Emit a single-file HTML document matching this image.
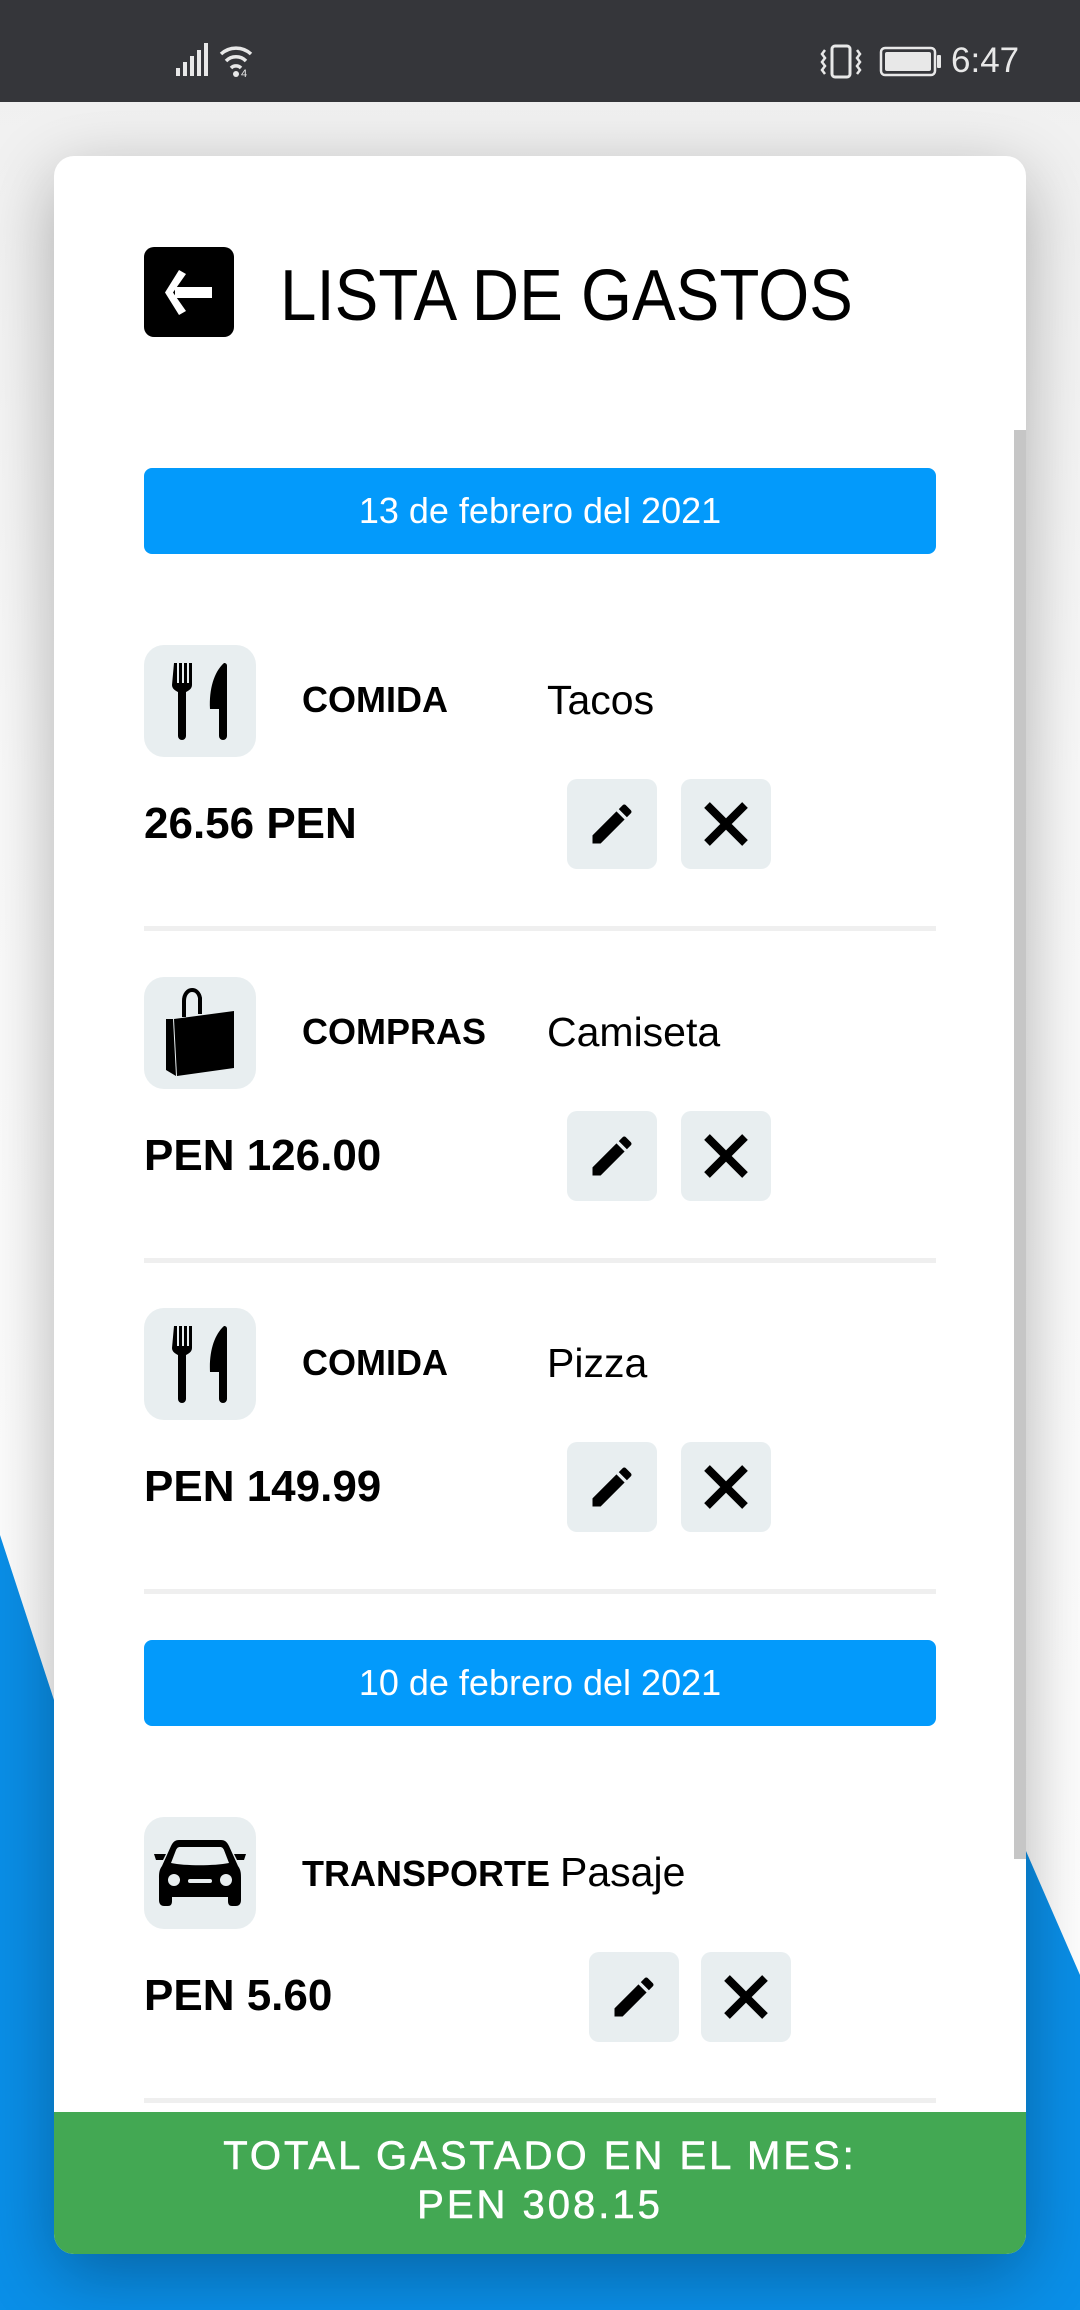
<!DOCTYPE html>
<html><head><meta charset="utf-8"><style>
*{margin:0;padding:0;box-sizing:border-box}
body{width:1080px;height:2310px;position:relative;overflow:hidden;font-family:"Liberation Sans",sans-serif;background:#f7f7f7}
.sb{position:absolute;left:0;top:0;width:1080px;height:102px;background:#35363a;z-index:5}
.card{position:absolute;left:54px;top:156px;width:972px;height:2098px;background:#fff;border-radius:20px;box-shadow:0 20px 70px rgba(0,0,0,0.3);overflow:hidden;z-index:3}
.abs{position:absolute}
.date{position:absolute;left:90px;width:792px;height:86px;background:#039afb;border-radius:8px;color:#fff;font-size:36px;text-align:center;line-height:86px}
.ibox{position:absolute;left:90px;width:112px;height:112px;background:#e8eef0;border-radius:20px}
.cat{position:absolute;left:248px;font-size:36px;font-weight:bold;line-height:40px}
.name{position:absolute;font-size:41px;line-height:46px}
.amt{position:absolute;left:90px;font-size:44px;font-weight:bold;line-height:50px}
.btn{position:absolute;width:90px;height:90px;background:#e8eef0;border-radius:10px}
.btn svg{position:absolute;left:19px;top:19px}
.div{position:absolute;left:90px;width:792px;height:5px;background:#efefef}
</style></head><body>
<svg class="abs" style="left:0;top:0;z-index:1" width="1080" height="2310">
<defs><linearGradient id="g" x1="0" y1="0" x2="0" y2="1"><stop offset="0" stop-color="#efefef"/><stop offset="0.4" stop-color="#fafafa"/><stop offset="1" stop-color="#ffffff"/></linearGradient></defs>
<rect x="0" y="0" width="1080" height="2310" fill="#0a8fe8"/>
<polygon points="0,0 1080,0 1080,1975 1026,1851 1026,1000 54,1000 54,1700 0,1535" fill="url(#g)"/></svg>
<div class="sb">
<svg class="abs" style="left:175px;top:42px" width="90" height="36" viewBox="0 0 90 36">
<g fill="#e8e8e8"><rect x="1" y="26" width="4" height="8"/><rect x="8" y="20" width="4" height="14"/><rect x="15" y="14" width="4" height="20"/><rect x="22" y="8" width="4" height="26"/><rect x="29" y="1" width="4" height="33"/></g>
<g fill="none" stroke="#e8e8e8" stroke-width="3.5"><path d="M46 12 A22 22 0 0 1 76 12"/><path d="M51 19 A14 14 0 0 1 71 19"/><path d="M56 26 A7 7 0 0 1 66 26"/></g>
<circle cx="61" cy="32" r="3" fill="#e8e8e8"/><text x="66" y="35" font-size="11" fill="#e8e8e8" font-family="Liberation Sans">4</text></svg>
<svg class="abs" style="left:820px;top:44px" width="125" height="36" viewBox="0 0 125 36">
<rect x="12" y="2" width="18" height="31" rx="3" fill="none" stroke="#e8e8e8" stroke-width="3"/>
<path d="M5 6 l-3 4 l3 4 l-3 4 l3 4 l-3 4 l3 4 M37 6 l3 4 l-3 4 l3 4 l-3 4 l3 4 l-3 4" fill="none" stroke="#e8e8e8" stroke-width="2.5"/>
<rect x="61" y="4" width="54" height="27" rx="4" fill="none" stroke="#e8e8e8" stroke-width="2.5"/>
<rect x="65" y="8" width="46" height="19" rx="2" fill="#e8e8e8"/>
<rect x="117" y="11" width="4" height="13" rx="1" fill="#e8e8e8"/></svg>
<div class="abs" style="left:951px;top:40px;font-size:35px;color:#e8e8e8;line-height:42px">6:47</div>
</div>
<div class="card">
<div class="abs" style="left:90px;top:91px;width:90px;height:90px;background:#000;border-radius:10px">
<svg class="abs" style="left:0;top:0" width="90" height="90" viewBox="0 0 90 90"><polygon points="35,23 42,27 29,45.5 42,64 35,68 21,45.5" fill="#fff"/><rect x="31" y="40" width="37" height="11" fill="#fff"/></svg></div>
<div class="abs" style="left:226px;top:100px;font-size:72px;line-height:80px;transform:scaleX(0.91);transform-origin:0 0;white-space:nowrap">LISTA DE GASTOS</div>
<div class="abs" style="right:0;top:274px;width:12px;height:1429px;background:#c6c6c6"></div>

<div class="date" style="top:312px">13 de febrero del 2021</div>

<div class="ibox" style="top:489px"><svg width="112" height="112" viewBox="0 0 112 112"><path d="M30 18h3v20h2V18h3v20h2V18h3v20h2V18h3v22c0 4-4 6-6 7v44a4 4 0 0 1-8 0V47c-2-1-6-3-6-7z" fill="#000"/><path d="M80 18c2 0 3 1 3 3v70a4 4 0 0 1-8 0V64h-9c-1-20 4-37 14-46z" fill="#000"/></svg></div>
<div class="cat" style="top:524px">COMIDA</div>
<div class="name" style="left:493px;top:521px">Tacos</div>
<div class="amt" style="top:643px">26.56 PEN</div>
<div class="btn" style="left:513px;top:623px"><svg width="52" height="52" viewBox="0 0 24 24"><path d="M3 17.25V21h3.75L17.81 9.94l-3.75-3.75L3 17.25zM20.71 7.04a1 1 0 000-1.41l-2.34-2.34a1 1 0 00-1.41 0l-1.83 1.83 3.75 3.75 1.83-1.83z"/></svg></div>
<div class="btn" style="left:627px;top:623px"><svg width="52" height="52" viewBox="0 0 52 52"><path d="M7 7L45 45M45 7L7 45" stroke="#000" stroke-width="8"/></svg></div>
<div class="div" style="top:770px"></div>

<div class="ibox" style="top:821px"><svg width="112" height="112" viewBox="0 0 112 112"><path d="M40 40V24c0-7 4-11 8-11s7 3 8 8v16" fill="none" stroke="#000" stroke-width="4"/><polygon points="30,42 90,34 90,91 33,99" fill="#000"/><polygon points="22,42 29,42 32,99 22,93" fill="#000"/></svg></div>
<div class="cat" style="top:856px">COMPRAS</div>
<div class="name" style="left:493px;top:853px">Camiseta</div>
<div class="amt" style="top:975px">PEN 126.00</div>
<div class="btn" style="left:513px;top:955px"><svg width="52" height="52" viewBox="0 0 24 24"><path d="M3 17.25V21h3.75L17.81 9.94l-3.75-3.75L3 17.25zM20.71 7.04a1 1 0 000-1.41l-2.34-2.34a1 1 0 00-1.41 0l-1.83 1.83 3.75 3.75 1.83-1.83z"/></svg></div>
<div class="btn" style="left:627px;top:955px"><svg width="52" height="52" viewBox="0 0 52 52"><path d="M7 7L45 45M45 7L7 45" stroke="#000" stroke-width="8"/></svg></div>
<div class="div" style="top:1102px"></div>

<div class="ibox" style="top:1152px"><svg width="112" height="112" viewBox="0 0 112 112"><path d="M30 18h3v20h2V18h3v20h2V18h3v20h2V18h3v22c0 4-4 6-6 7v44a4 4 0 0 1-8 0V47c-2-1-6-3-6-7z" fill="#000"/><path d="M80 18c2 0 3 1 3 3v70a4 4 0 0 1-8 0V64h-9c-1-20 4-37 14-46z" fill="#000"/></svg></div>
<div class="cat" style="top:1187px">COMIDA</div>
<div class="name" style="left:493px;top:1184px">Pizza</div>
<div class="amt" style="top:1306px">PEN 149.99</div>
<div class="btn" style="left:513px;top:1286px"><svg width="52" height="52" viewBox="0 0 24 24"><path d="M3 17.25V21h3.75L17.81 9.94l-3.75-3.75L3 17.25zM20.71 7.04a1 1 0 000-1.41l-2.34-2.34a1 1 0 00-1.41 0l-1.83 1.83 3.75 3.75 1.83-1.83z"/></svg></div>
<div class="btn" style="left:627px;top:1286px"><svg width="52" height="52" viewBox="0 0 52 52"><path d="M7 7L45 45M45 7L7 45" stroke="#000" stroke-width="8"/></svg></div>
<div class="div" style="top:1433px"></div>

<div class="date" style="top:1484px">10 de febrero del 2021</div>

<div class="ibox" style="top:1661px"><svg width="112" height="112" viewBox="0 0 112 112"><path d="M35 23h42c4 0 6 2 8 6l9 20c3 4 3 8 3 12v22c0 4-2 6-5 6h-4c-3 0-4-2-4-5v-4H28v4c0 3-1 5-4 5h-4c-3 0-5-2-5-6V61c0-4 0-8 3-12l9-20c2-4 4-6 8-6z" fill="#000"/><path d="M36 30h40c2 0 3 1 4 3l5 13c-15 3-44 3-58 0l5-13c1-2 2-3 4-3z" fill="#e8eef0"/><circle cx="30" cy="63" r="6" fill="#e8eef0"/><circle cx="82" cy="63" r="6" fill="#e8eef0"/><rect x="44" y="62" width="24" height="4" rx="2" fill="#e8eef0"/><path d="M10 37h12l-3 6h-7zM102 37H90l3 6h7z" fill="#000"/></svg></div>
<div class="cat" style="top:1696px">TRANSPORTE <span style="font-weight:normal;font-size:41px">Pasaje</span></div>
<div class="amt" style="top:1815px">PEN 5.60</div>
<div class="btn" style="left:535px;top:1796px"><svg width="52" height="52" viewBox="0 0 24 24"><path d="M3 17.25V21h3.75L17.81 9.94l-3.75-3.75L3 17.25zM20.71 7.04a1 1 0 000-1.41l-2.34-2.34a1 1 0 00-1.41 0l-1.83 1.83 3.75 3.75 1.83-1.83z"/></svg></div>
<div class="btn" style="left:647px;top:1796px"><svg width="52" height="52" viewBox="0 0 52 52"><path d="M7 7L45 45M45 7L7 45" stroke="#000" stroke-width="8"/></svg></div>
<div class="div" style="top:1942px"></div>

<div class="abs" style="left:0;top:1956px;width:972px;height:142px;background:#43a853;color:#fff;text-align:center;font-size:40px;letter-spacing:3px;line-height:49px;padding-top:20px;-webkit-text-stroke:0.6px #fff">TOTAL GASTADO EN EL MES:<br>PEN 308.15</div>
</div>
</body></html>
